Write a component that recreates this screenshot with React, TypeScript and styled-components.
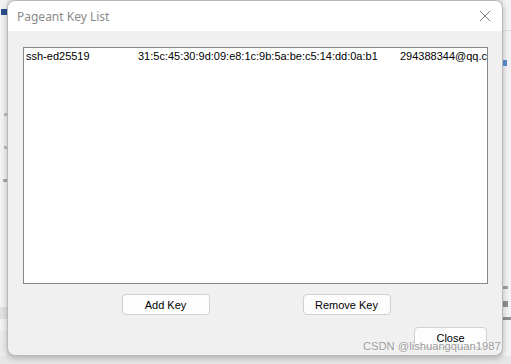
import React from 'react';
import styled, { createGlobalStyle } from 'styled-components';

const GlobalStyle = createGlobalStyle`
  html, body {
    margin: 0;
    padding: 0;
    width: 511px;
    height: 364px;
    overflow: hidden;
    background: #e9e9e9;
  }
`;

const Desktop = styled.div`
  position: relative;
  width: 511px;
  height: 364px;
  display: flex;
  align-items: flex-start;
  background: #e6e6e6;
  font-family: "Liberation Sans", Arial, sans-serif;
`;

const SideStrip = styled.div<{ $w: number; $align: string }>`
  width: ${p => p.$w}px;
  height: 356px;
  flex: none;
  background: #f3f3f3;
  display: flex;
  flex-direction: column;
  align-items: ${p => p.$align};
  overflow: hidden;
`;

const StripMark = styled.div<{ $h: number; $w?: number; $c: string; $mt?: number }>`
  width: ${p => (p.$w ? `${p.$w}px` : '100%')};
  height: ${p => p.$h}px;
  margin-top: ${p => p.$mt ?? 0}px;
  background: ${p => p.$c};
  flex: none;
`;

const Window = styled.div`
  width: 494px;
  height: 354px;
  flex: none;
  border: 1px solid #b9b9b9;
  border-radius: 8px;
  background: #f0f0f0;
  box-shadow: 0 2px 6px rgba(0, 0, 0, 0.25);
  display: flex;
  flex-direction: column;
  overflow: hidden;
  position: relative;
  z-index: 1;
`;

const TitleBar = styled.div`
  height: 30px;
  background: #ffffff;
  display: flex;
  align-items: center;
  padding-left: 9px;
  padding-right: 9px;
  flex: none;
`;

const Title = styled.div`
  font-family: "Noto Sans", "Open Sans", sans-serif;
  font-size: 12px;
  color: #8a8a8a;
  flex: 1;
`;

const CloseX = styled.svg`
  width: 12px;
  height: 12px;
  margin-right: 2px;
`;

const Body = styled.div`
  flex: 1;
  display: flex;
  flex-direction: column;
  padding: 16px 14px 0 15px;
`;

const KeyList = styled.div`
  height: 235px;
  background: #ffffff;
  border: 1px solid #828790;
  overflow: hidden;
`;

const Row = styled.div`
  display: grid;
  grid-template-columns: 112px 262px 100px;
  height: 14px;
  padding: 2px 0 0 2px;
  font-size: 11px;
  color: #000;
  white-space: nowrap;
`;

const Cell = styled.div`
  overflow: visible;
`;

const ButtonRow = styled.div`
  display: flex;
  justify-content: center;
  gap: 93px;
  margin-top: 10px;
  padding-left: 1px;
`;

const Button = styled.button<{ $w: number }>`
  width: ${p => p.$w}px;
  height: 21px;
  padding: 0;
  background: #fdfdfd;
  border: 1px solid #d0d0d0;
  border-radius: 4px;
  font-family: "Liberation Sans", Arial, sans-serif;
  font-size: 11px;
  color: #000;
`;

const FooterRow = styled.div`
  display: flex;
  justify-content: flex-end;
  margin-top: 12px;
  padding-right: 1px;
`;

const Watermark = styled.div`
  position: absolute;
  left: 363px;
  top: 340px;
  z-index: 2;
  font-family: "Liberation Sans", Arial, sans-serif;
  font-size: 11.2px;
  color: #9a9a9a;
  text-shadow: 0 0 2px #ffffff, 0 0 1px #ffffff;
  white-space: nowrap;
`;

export default function App() {
  return (
    <>
      <GlobalStyle />
      <Desktop>
        <SideStrip $w={7} $align="flex-end">
          <StripMark $h={6} $w={6} $c="#2a4f8f" $mt={9} />
          <StripMark $h={3} $w={3} $c="#c0c0c0" $mt={98} />
          <StripMark $h={3} $w={3} $c="#c0c0c0" $mt={30} />
          <StripMark $h={3} $w={4} $c="#a8a8a8" $mt={30} />
          <StripMark $h={12} $c="#e2e2e2" $mt={125} />
          <StripMark $h={40} $c="#ececec" $mt={12} />
          <StripMark $h={3} $c="#9a9a9a" $mt={0} />
        </SideStrip>
        <Window>
          <TitleBar>
            <Title>Pageant Key List</Title>
            <CloseX viewBox="0 0 12 12">
              <path d="M1 1 L11 11 M11 1 L1 11" stroke="#7a7a7a" strokeWidth="1" fill="none" />
            </CloseX>
          </TitleBar>
          <Body>
            <KeyList>
              <Row>
                <Cell>ssh-ed25519</Cell>
                <Cell>31:5c:45:30:9d:09:e8:1c:9b:5a:be:c5:14:dd:0a:b1</Cell>
                <Cell>294388344@qq.com</Cell>
              </Row>
            </KeyList>
            <ButtonRow>
              <Button $w={88}>Add Key</Button>
              <Button $w={88}>Remove Key</Button>
            </ButtonRow>
            <FooterRow>
              <Button $w={73}>Close</Button>
            </FooterRow>
          </Body>
        </Window>
        <SideStrip $w={8} $align="flex-start">
          <StripMark $h={1} $c="#dcdcdc" $mt={30} />
          <StripMark $h={6} $w={4} $c="#5b8fd0" $mt={29} />
          <StripMark $h={3} $w={5} $c="#a0a0a0" $mt={220} />
          <StripMark $h={6} $w={5} $c="#909090" $mt={12} />
          <StripMark $h={3} $c="#909090" $mt={10} />
        </SideStrip>
        <Watermark>CSDN @lishuangquan1987</Watermark>
      </Desktop>
    </>
  );
}
